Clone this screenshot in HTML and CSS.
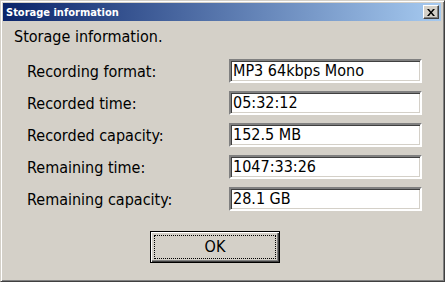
FILE: index.html
```html
<!DOCTYPE html>
<html lang="en">
<head>
  <meta charset="UTF-8" />
  <title>Storage information</title>
  <link rel="stylesheet" href="styles.css">
</head>
<body>
  <div class="window">
    <div class="titlebar">
      <span class="title">Storage information</span>
      <button class="close" aria-label="Close">
        <svg width="8" height="7" viewBox="0 0 8 7"><path d="M0 0h2l2 2.5L6 0h2L5 3.5 8 7H6L4 4.5 2 7H0l3-3.5z" fill="#000"/></svg>
      </button>
    </div>

    <div class="body">
      <p class="heading">Storage information.</p>

      <div class="fields">
        <span class="label">Recording format:</span>
        <span class="value">MP3 64kbps Mono</span>

        <span class="label">Recorded time:</span>
        <span class="value">05:32:12</span>

        <span class="label">Recorded capacity:</span>
        <span class="value">152.5 MB</span>

        <span class="label">Remaining time:</span>
        <span class="value">1047:33:26</span>

        <span class="label">Remaining capacity:</span>
        <span class="value">28.1 GB</span>
      </div>

      <div class="actions">
        <button class="ok"><span class="focus">OK</span></button>
      </div>
    </div>
  </div>
</body>
</html>
```

FILE: styles.css
```css
* { box-sizing: border-box; }
body, html {
  margin: 0;
  padding: 0;
  background: #d4d0c8;
}

.window {
  width: 445px;
  height: 282px;
  display: flex;
  flex-direction: column;
  background: #d4d0c8;
  border: 1px solid;
  border-color: #d4d0c8 #404040 #404040 #d4d0c8;
  box-shadow: inset 1px 1px #fff, inset -1px -1px #808080;
  padding: 2px 3px 1px 2px;
  font-family: "DejaVu Sans Condensed", "DejaVu Sans", sans-serif;
  color: #000;
}

.titlebar {
  height: 18px;
  display: flex;
  align-items: center;
  justify-content: space-between;
  padding: 0 2px 0 3px;
  background: linear-gradient(to right, #0a246a, #a6caf0);
}

.title {
  color: #fff;
  font-weight: bold;
  font-size: 11px;
}

.close {
  width: 16px;
  height: 14px;
  padding: 0;
  display: flex;
  align-items: center;
  justify-content: center;
  background: #d4d0c8;
  border: 1px solid;
  border-color: #fff #404040 #404040 #fff;
  box-shadow: inset -1px -1px #808080;
}

.body {
  flex-grow: 1;
  padding: 0 0 0 11px;
}

.heading {
  margin: 7px 0 0;
  font-size: 16px;
  line-height: 18px;
}

.fields {
  display: grid;
  grid-template-columns: 202px 193px;
  row-gap: 8px;
  margin: 13px 0 0 13px;
  align-items: center;
}

.label {
  font-size: 16px;
}

.value {
  height: 24px;
  line-height: 20px;
  padding: 0 2px;
  font-size: 16px;
  background: #fff;
  border: 2px solid;
  border-color: #808080 #fff #fff #808080;
  box-shadow: inset 1px 1px #404040, inset -1px -1px #d4d0c8;
}

.actions {
  margin: 20px 0 0 136px;
}

.ok {
  width: 130px;
  height: 32px;
  padding: 3px;
  background: #d4d0c8;
  border: 1px solid #000;
  box-shadow: inset 1px 1px #fff, inset -1px -1px #404040, inset -2px -2px #808080;
  font-family: inherit;
  font-size: 16px;
  color: #000;
}

.focus {
  display: block;
  height: 100%;
  line-height: 22px;
  border: 1px dotted #000;
}
```
